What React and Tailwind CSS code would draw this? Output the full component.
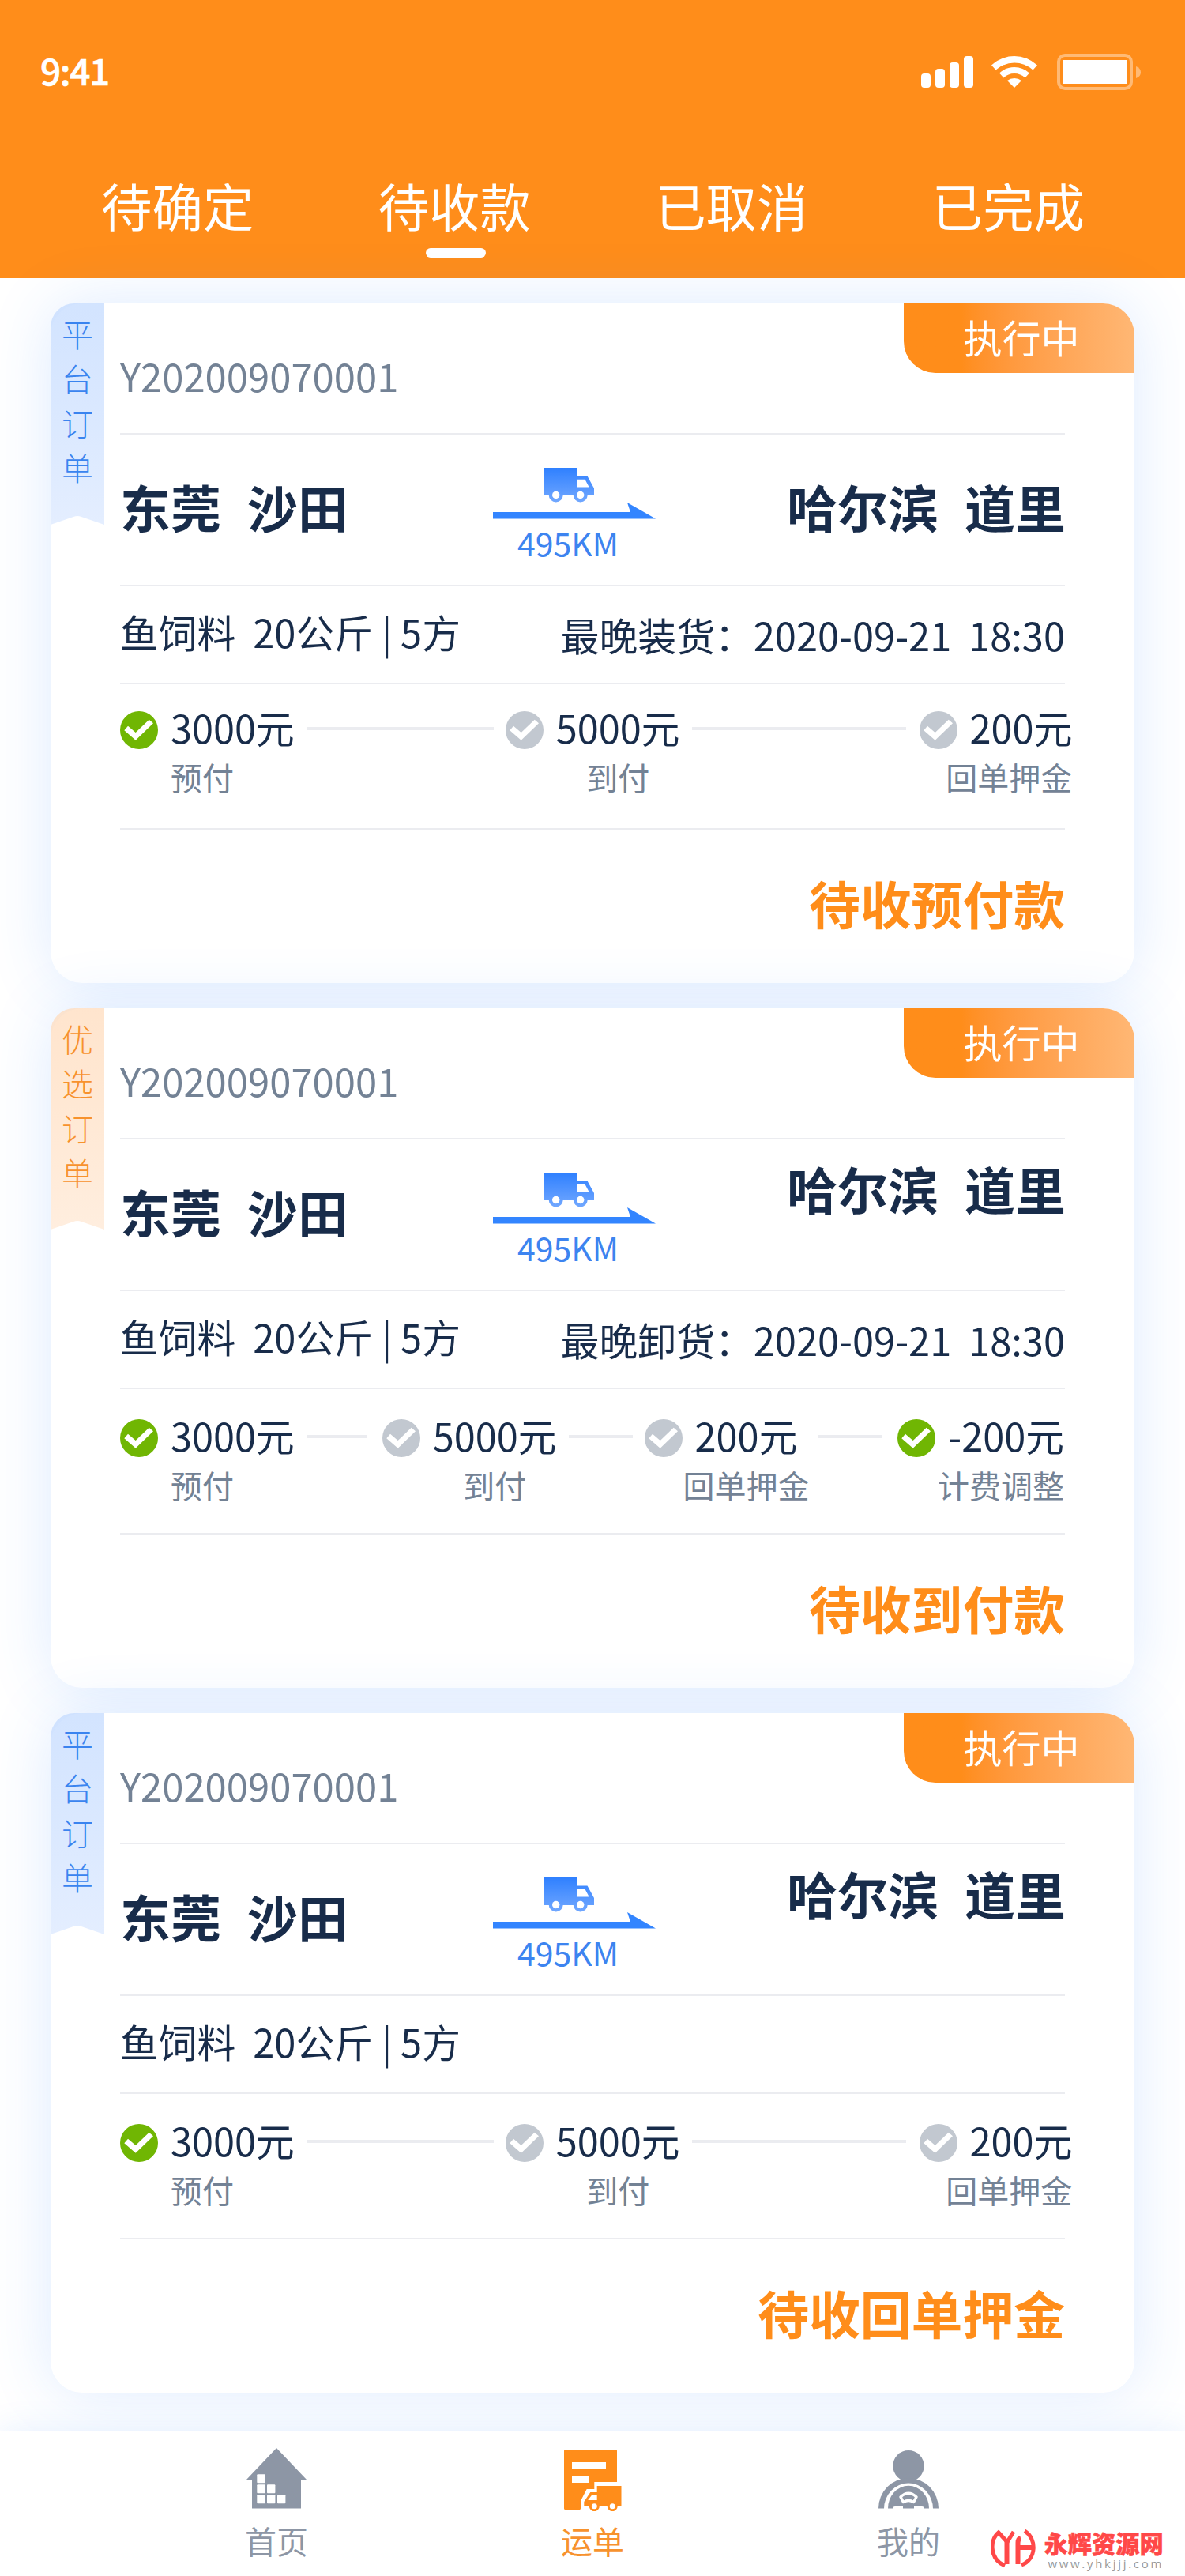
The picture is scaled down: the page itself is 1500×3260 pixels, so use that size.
import React from 'react';

const TABS = ['待确定', '待收款', '已取消', '已完成'];

const PLATFORM = {
  label: '平台订单',
  color: 'text-[#3a84ef]',
  from: '#c4dbff',
  to: '#e1ecff',
};

const PREFERRED = {
  label: '优选订单',
  color: 'text-[#f7922d]',
  from: '#ffdcbd',
  to: '#ffecdb',
};

// line: la línea que conecta con el paso anterior
const THREE_STEPS = [
  { amount: '3000元', name: '预付', paid: true, align: 'items-start' },
  { amount: '5000元', name: '到付', line: 'ml-[15px] mr-[15px] w-[237px]', align: 'items-center' },
  { amount: '200元', name: '回单押金', line: 'ml-[15px] mr-[17px] w-[271px]', align: 'items-end' },
];

const FOUR_STEPS = [
  { amount: '3000元', name: '预付', paid: true, align: 'items-start' },
  { amount: '5000元', name: '到付', line: 'ml-[15px] mr-[19px] w-[77px]', align: 'items-center' },
  { amount: '200元', name: '回单押金', line: 'ml-[15px] mr-[15px] w-[81px]', align: 'items-center' },
  { amount: '-200元', name: '计费调整', paid: true, line: 'ml-[26px] mr-[19px] w-[82px]', align: 'items-end' },
];

const ORDERS = [
  {
    id: 1,
    type: PLATFORM,
    deadline: '最晚装货：2020-09-21  18:30',
    steps: THREE_STEPS,
    stepsPad: 'pt-[34px]',
    cityPad: 'pb-[11px]',
    status: '待收预付款',
  },
  {
    id: 2,
    type: PREFERRED,
    deadline: '最晚卸货：2020-09-21  18:30',
    steps: FOUR_STEPS,
    stepsPad: 'pt-[38px]',
    cityPad: 'pb-[68px]',
    status: '待收到付款',
  },
  {
    id: 3,
    type: PLATFORM,
    steps: THREE_STEPS,
    stepsPad: 'pt-[38px]',
    cityPad: 'pb-[68px]',
    status: '待收回单押金',
  },
];

const StatusBar = () => (
  <div className="flex h-[182px] items-center justify-between pl-[51px] pr-14">
    <span className="pb-[6px] text-[46px] leading-none font-medium tracking-[-1.4px] [-webkit-text-stroke:0.6px_#fff]">9:41</span>
    <div className="flex items-center">
      <svg width="66" height="40" viewBox="0 0 66 40" fill="#fff">
        <rect x="0" y="22" width="12" height="18" rx="4" />
        <rect x="18" y="16" width="12" height="24" rx="4" />
        <rect x="36" y="8" width="12" height="32" rx="4" />
        <rect x="54" y="0" width="12" height="40" rx="4" />
      </svg>
      <svg className="ml-[23px]" width="58" height="40" viewBox="0 0 58 40" fill="#fff">
        <path d="M0 11.5Q13 0 29 0T58 11.5L52.5 17.5Q42 8.5 29 8.5T5.5 17.5Z" />
        <path d="M10 21.5Q18 14 29 14T48 21.5L42.5 27.5Q37 22 29 22T15.5 27.5Z" />
        <path d="M20 31Q24 28 29 28T38 31L29 40Z" />
      </svg>
      <svg className="ml-6" width="107" height="46" viewBox="0 0 107 46">
        <rect x="3" y="2" width="92" height="42" rx="8" fill="none" stroke="#fff" strokeOpacity="0.4" strokeWidth="4" />
        <rect x="9" y="8" width="80" height="30" fill="#fff" />
        <path d="M101 16Q107 18 107 23.500T101 31Z" fill="#fff" fillOpacity="0.4" />
      </svg>
    </div>
  </div>
);

const Header = () => (
  <header className="h-[352px] bg-[#ff8d1a] text-white">
    <StatusBar />
    <nav className="flex justify-between pt-[37px] pl-[128px] pr-[127px]">
      {TABS.map((tab, i) => (
        <div key={tab} className="flex flex-col items-center">
          <span className="text-[64.4px] leading-[80px]">{tab}</span>
          {i === 1 && <span className="mt-[15px] ml-1 h-3 w-[76px] rounded-full bg-white" />}
        </div>
      ))}
    </nav>
  </header>
);

const Ribbon = ({ type, id }) => (
  <div className={`relative h-[280px] w-[68px] shrink-0 ${type.color}`}>
    <svg className="absolute inset-0" width="68" height="280" viewBox="0 0 68 280">
      <defs>
        <linearGradient id={`ribbon-${id}`} x1="0" y1="0" x2="0" y2="1">
          <stop offset="0" stopColor={type.from} stopOpacity="0.75" />
          <stop offset="1" stopColor={type.to} stopOpacity="0.9" />
        </linearGradient>
      </defs>
      <path d="M30 0H68V280L39 270Q34 268 29 270L0 280V30A30 30 0 0 1 30 0Z" fill={`url(#ribbon-${id})`} />
    </svg>
    <div className="relative flex flex-col items-center pt-[10px] text-[40px] leading-[56.3px] font-light">
      {type.label.split('').map((c) => (
        <span key={c}>{c}</span>
      ))}
    </div>
  </div>
);

const Truck = ({ id }) => (
  <svg className="mr-[14px]" width="64" height="44" viewBox="0 0 64 44">
    <defs>
      <linearGradient id={`truck-${id}`} gradientUnits="userSpaceOnUse" x1="0" y1="0" x2="0" y2="44">
        <stop offset="0" stopColor="#2f80ff" />
        <stop offset="1" stopColor="#72a8ff" />
      </linearGradient>
    </defs>
    <g fill={`url(#truck-${id})`}>
      <path fillRule="evenodd" d="M0 0H42V10.500H55.500L64 26V35H0ZM42 14.700V24.500H57.700L52.500 14.700Z" />
      <circle cx="15.700" cy="34.500" r="9" />
      <circle cx="46.700" cy="34.500" r="9" />
    </g>
    <circle cx="15.700" cy="34.500" r="4.700" fill="#fff" />
    <circle cx="46.700" cy="34.500" r="4.700" fill="#fff" />
  </svg>
);

const Check = ({ paid }) => (
  <svg className="shrink-0" width="48" height="48" viewBox="0 0 48 48">
    <circle cx="24" cy="24" r="24" fill={paid ? '#70b603' : '#c2c8d0'} />
    <path d="M5.300 24.300L10 18.700L19.700 27L36.700 10.700L42 15.300L19.700 36.700Z" fill="#fff" />
  </svg>
);

const Steps = ({ steps }) => (
  <div className="flex items-start whitespace-nowrap">
    {steps.map((s) => (
      <React.Fragment key={s.name}>
        {s.line && <span className={`mt-5 h-1 shrink-0 bg-[#ebecf0] ${s.line}`} />}
        <Check paid={s.paid} />
        <div className={`ml-4 flex w-min flex-col ${s.align}`}>
          <span className="-mt-1 text-[48.7px] leading-[48px]">{s.amount}</span>
          <div className={`flex h-[56px] w-0 min-w-full flex-col pt-[11px] text-[40px] leading-[56px] text-[#738295] ${s.align}`}>
            <span>{s.name}</span>
          </div>
        </div>
      </React.Fragment>
    ))}
  </div>
);

const OrderCard = ({ order }) => (
  <article className="relative flex h-[860px] rounded-[40px] bg-white shadow-[0_0_80px_rgba(51,133,255,0.16)]">
    <Ribbon type={order.type} id={order.id} />
    <div className="ml-5 w-[1196px] text-[48.8px] whitespace-pre text-[#182c4a]">
      <div className="h-[166px] border-b-2 border-[#ebecf0] pt-[56px] text-[49px] leading-[70px] text-[#738295]">Y202009070001</div>

      <div className="flex h-[192px] items-center border-b-2 border-[#ebecf0] text-[64px] font-bold [word-spacing:2px]">
        <span className="w-[472px] pb-[11px] leading-[80px]">东莞  沙田</span>
        <div className="flex flex-col items-center self-start pt-[42px] text-[#3385ff]">
          <Truck id={order.id} />
          <svg width="206" height="21" viewBox="0 0 206 21" fill="currentColor">
            <path d="M0 12H174L170 0L206 20.500H0Z" />
          </svg>
          <span className="mr-[16px] text-[41px] leading-[58px] font-normal text-[#3d84f0]">495KM</span>
        </div>
        <span className={`-mr-px ml-auto leading-[80px] ${order.cityPad}`}>哈尔滨  道里</span>
      </div>

      <div className="flex h-[124px] items-center justify-between border-b-2 border-[#ebecf0] pb-2">
        <span>鱼饲料  20公斤 | 5方</span>
        {order.deadline && <span className="pt-2">{order.deadline}</span>}
      </div>

      <div className={`h-[184px] border-b-2 border-[#ebecf0] ${order.stepsPad}`}>
        <Steps steps={order.steps} />
      </div>

      <div className="pt-[52px] text-right text-[64.8px] leading-[80px] font-bold text-[#ff8d1a]">{order.status}</div>
    </div>

    <div className="absolute top-0 right-0 flex h-[88px] w-[292px] items-center justify-center rounded-tr-[40px] rounded-bl-[40px] bg-linear-to-r from-[#ff8d1a] from-25% to-[#ffb774] pb-[5px] pl-1.5 text-[49px] text-white">
      执行中
    </div>
  </article>
);

const HomeIcon = () => (
  <svg className="mb-[3px]" width="76" height="77" viewBox="0 0 76 77">
    <path d="M38 0L76 40H69V76.500H7V40H0Z" fill="#8d96a5" />
    <g fill="#fff">
      <rect x="13.300" y="33.300" width="10.400" height="11" rx="1" />
      <rect x="13.300" y="46.300" width="10.400" height="11" rx="1" />
      <rect x="26" y="46.300" width="10.400" height="11" rx="1" />
      <rect x="13.300" y="59.300" width="10.400" height="11" rx="1" />
      <rect x="26" y="59.300" width="10.400" height="11" rx="1" />
      <rect x="39" y="59.300" width="10.400" height="11" rx="1" />
    </g>
  </svg>
);

const WaybillIcon = () => (
  <svg width="73" height="78" viewBox="0 0 73 78" fill="#ff8d1a">
    <path
      fillRule="evenodd"
      d="M1.500 0H65.500Q67 0 67 1.500V41H38.300V50H28.700L21 65V74.500Q21 76 19.500 76H1.500Q0 76 0 74.500V1.500Q0 0 1.500 0ZM10 16V24H53V16ZM10 34V42H31.800V34Z"
    />
    <path fillRule="evenodd" d="M41.700 46H72.500V71.700H25.300V66L33.300 54H41.700ZM41.700 57H35.600L30.200 64H41.700Z" />
    <circle cx="38.300" cy="71.700" r="6.500" />
    <circle cx="61.200" cy="71.700" r="6.500" />
    <circle cx="38.300" cy="71.700" r="3.500" fill="#fff" />
    <circle cx="61.200" cy="71.700" r="3.500" fill="#fff" />
  </svg>
);

const DriverIcon = () => (
  <svg className="mb-[3px]" width="76" height="74" viewBox="0 0 76 74" fill="#8d96a5">
    <circle cx="38" cy="19.700" r="19.700" />
    <path d="M0 73.500A38 38.500 0 0 1 76 73.500Z" />
    <path d="M7 74A31 32.500 0 0 1 69 74Z" fill="#fff" />
    <path d="M12 73.500A26 28.800 0 0 1 64 73.500Z" />
    <path d="M28 59Q38 49.500 48 59L44.500 65.500Q38 61.500 31.500 65.500Z" stroke="#fff" strokeWidth="3.500" strokeLinejoin="round" />
    <path d="M18 74Q18 71 21 71H31V74ZM58 74Q58 71 55 71H45V74Z" fill="#fff" />
  </svg>
);

const NAV = [
  { name: '首页', Icon: HomeIcon, color: 'text-[#8d96a5]' },
  { name: '运单', Icon: WaybillIcon, color: 'text-[#f7922d]' },
  { name: '我的', Icon: DriverIcon, color: 'text-[#8d96a5]' },
];

const BottomNav = () => (
  <footer className="relative flex h-[184px] bg-white px-[150px] shadow-[0_0_40px_rgba(51,133,255,0.12)]">
    {NAV.map(({ name, Icon, color }) => (
      <div key={name} className={`flex w-[400px] flex-col items-center ${color}`}>
        <div className="flex h-[102px] items-end">
          <Icon />
        </div>
        <span className="mt-[9px] text-[40px] leading-[56px]">{name}</span>
      </div>
    ))}

    <div className="absolute right-[27px] bottom-0 flex h-[60px] items-start">
      <svg className="mt-px mr-[10px]" width="56" height="49" viewBox="0 0 56 49" fill="none" stroke="#ff4848" strokeWidth="5">
        <path d="M17 46C-2 38 -3 14 9 4L20 16L28 3" />
        <path d="M19.500 15V44" strokeWidth="6" />
        <path d="M33.500 44V17Q33.500 12 37 11M33.500 23H51" strokeWidth="6" />
        <path d="M42 2C58 12 57 38 38 45" />
      </svg>
      <div className="flex flex-col">
        <span className="text-[30.3px] leading-[37px] font-black text-[#ff4848] [-webkit-text-stroke:0.4px_#ff4848]">永辉资源网</span>
        <span className="pt-px pl-[5px] font-['Open_Sans','Noto_Sans',sans-serif] text-[15px] leading-[12px] tracking-[2.7px] text-[#999]">
          www.yhkjjj.com
        </span>
      </div>
    </div>
  </footer>
);

const App = () => (
  <div className="h-[3260px] w-[1500px] overflow-hidden bg-white font-['Noto_Sans_CJK_SC','Noto_Sans',sans-serif]">
    <Header />
    <main className="flex h-[2724px] flex-col gap-8 px-16 pt-8">
      {ORDERS.map((order) => (
        <OrderCard key={order.id} order={order} />
      ))}
    </main>
    <BottomNav />
  </div>
);

export default App;
